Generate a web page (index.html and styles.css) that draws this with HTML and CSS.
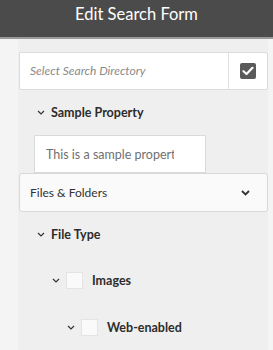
FILE: index.html
```html
<!DOCTYPE html>
<html lang="en">
<head>
    <meta charset="UTF-8">
    <title>Edit Search Form</title>
    <link rel="stylesheet" href="styles.css">
</head>
<body>
    <header class="title-bar">Edit Search Form</header>

    <div class="panel">
        <div class="directory">
            <span class="directory-placeholder">Select Search Directory</span>
            <span class="directory-action">
                <span class="checkbox-checked">
                    <svg width="12" height="10" viewBox="0 0 12 10"><path d="M1.5 5.2 L4.5 8 L10.5 1.8" fill="none" stroke="#fff" stroke-width="2.2" stroke-linecap="round" stroke-linejoin="round"/></svg>
                </span>
            </span>
        </div>

        <div class="section">
            <div class="section-head">
                <svg class="chevron" width="8" height="5" viewBox="0 0 8 5"><path d="M1 1 L4 4 L7 1" fill="none" stroke="#333" stroke-width="1.2"/></svg>
                <span>Sample Property</span>
            </div>
            <div class="text-field"><span class="text-value">This is a sample property</span></div>
        </div>

        <div class="dropdown">
            <span>Files &amp; Folders</span>
            <svg width="9" height="6" viewBox="0 0 9 6"><path d="M1 1 L4.5 4.5 L8 1" fill="none" stroke="#333" stroke-width="1.8"/></svg>
        </div>

        <div class="section">
            <div class="section-head">
                <svg class="chevron" width="8" height="5" viewBox="0 0 8 5"><path d="M1 1 L4 4 L7 1" fill="none" stroke="#333" stroke-width="1.2"/></svg>
                <span>File Type</span>
            </div>
            <div class="tree-item level-1">
                <svg class="chevron" width="8" height="5" viewBox="0 0 8 5"><path d="M1 1 L4 4 L7 1" fill="none" stroke="#333" stroke-width="1.2"/></svg>
                <span class="checkbox"></span>
                <span>Images</span>
            </div>
            <div class="tree-item level-2">
                <svg class="chevron" width="8" height="5" viewBox="0 0 8 5"><path d="M1 1 L4 4 L7 1" fill="none" stroke="#333" stroke-width="1.2"/></svg>
                <span class="checkbox"></span>
                <span>Web-enabled</span>
            </div>
        </div>
    </div>
</body>
</html>
```

FILE: styles.css
```css
* {
    margin: 0;
    padding: 0;
    box-sizing: border-box;
}

body {
    font-family: 'Lato', sans-serif;
    background-color: #f4f4f4;
    color: #2c2c2c;
    overflow: hidden;
}

.title-bar {
    height: 39px;
    background-color: #4b4b4b;
    border-bottom: 2px solid #9a9a9a;
    color: #fff;
    font-size: 16.5px;
    text-align: center;
    line-height: 29px;
}

.panel {
    margin: 0 5px 0 18px;
    min-height: 320px;
    background-color: #efefef;
    padding-top: 13px;
}

.directory {
    display: flex;
    height: 38px;
    margin-left: 1px;
    background: #fff;
    border: 1px solid #dcdcdc;
    border-radius: 2px;
}

.directory-placeholder {
    flex: 1;
    padding-left: 10px;
    line-height: 36px;
    font-style: italic;
    font-size: 12px;
    color: #8a8a8a;
}

.directory-action {
    width: 39px;
    display: flex;
    align-items: center;
    justify-content: center;
    border-left: 1px solid #e2e2e2;
}

.checkbox-checked {
    width: 16px;
    height: 16px;
    border-radius: 2px;
    background: #5a5a5a;
    display: flex;
    align-items: center;
    justify-content: center;
}

.section-head {
    display: flex;
    align-items: center;
    height: 45px;
    padding-left: 19px;
    font-weight: 700;
    font-size: 12.5px;
}

.chevron {
    margin-right: 6px;
}

.text-field {
    margin-left: 16px;
    width: 172px;
    height: 38px;
    background: #fff;
    border: 1px solid #dadada;
    padding-left: 11px;
    line-height: 37px;
    font-size: 12.5px;
    color: #707070;
}

.text-value {
    display: block;
    width: 128px;
    overflow: hidden;
    white-space: nowrap;
}

.dropdown {
    display: flex;
    align-items: center;
    justify-content: space-between;
    height: 39px;
    margin-left: 1px;
    padding: 0 17px 0 10px;
    background: #fafafa;
    border: 1px solid #d8d8d8;
    border-radius: 3px;
    font-size: 12px;
    color: #333;
}

.tree-item {
    display: flex;
    align-items: center;
    height: 47px;
    font-weight: 700;
    font-size: 12.5px;
}

.level-1 {
    padding-left: 34px;
}

.level-2 {
    padding-left: 49px;
}

.checkbox {
    width: 17px;
    height: 17px;
    background: #fafafa;
    border: 1px solid #e4e4e4;
    margin-right: 9px;
}
```
